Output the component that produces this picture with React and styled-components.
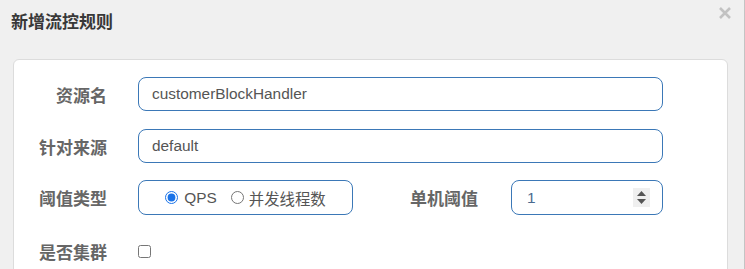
import React from 'react';
import styled, { createGlobalStyle } from 'styled-components';

const GlobalStyle = createGlobalStyle`
    html, body {
        margin: 0;
        padding: 0;
        background: #f0f0f0;
    }
    * {
        box-sizing: border-box;
    }
`;

const FONT = `"Liberation Sans", "Noto Sans CJK SC", sans-serif`;
const BLUE = '#3b78b7';

const Page = styled.div`
    width: 745px;
    height: 269px;
    overflow: hidden;
    background: #f0f0f0;
    font-family: ${FONT};
    border-right: 1px solid #c4c4c4;
`;

const Header = styled.div`
    display: flex;
    justify-content: space-between;
    align-items: flex-start;
    height: 59px;
    padding: 6px 12px 0 11px;
`;

const Title = styled.h4`
    margin: 7px 0 0 0;
    font-size: 17px;
    line-height: 20px;
    font-weight: 700;
    color: #383838;
`;

const Close = styled.button`
    display: flex;
    padding: 0;
    border: none;
    background: none;
    cursor: pointer;
`;

const Card = styled.div`
    margin: 0 16px 0 13px;
    min-height: 240px;
    padding-top: 17px;
    background: #fff;
    border: 1px solid #dcdcdc;
    border-radius: 6px 6px 0 0;
`;

const Row = styled.div`
    display: flex;
    align-items: center;
    height: ${props => props.h}px;
    margin-bottom: ${props => props.gap}px;
`;

const Label = styled.label`
    width: ${props => props.w}px;
    margin-right: ${props => props.mr}px;
    text-align: right;
    font-size: 17px;
    font-weight: 700;
    color: #666;
    white-space: nowrap;
`;

const TextInput = styled.input`
    width: 525px;
    height: 34px;
    padding: 0 13px;
    border: 1px solid ${BLUE};
    border-radius: 8px;
    font-family: ${FONT};
    font-size: 15.4px;
    color: #555;
    outline: none;
`;

const RadioGroup = styled.div`
    display: flex;
    align-items: center;
    justify-content: center;
    width: 215px;
    height: 35px;
    border: 1px solid ${BLUE};
    border-radius: 8px;
`;

const RadioOption = styled.label`
    display: flex;
    align-items: center;
    gap: ${props => props.gap}px;
    margin-right: ${props => props.mr || 0}px;
    font-size: 15.4px;
    color: #555;
    input {
        margin: 0;
        width: 13px;
        height: 13px;
        accent-color: #1a73e8;
    }
`;

const NumberBox = styled.div`
    display: flex;
    align-items: center;
    width: 152px;
    height: 35px;
    padding: 0 12px 0 15px;
    border: 1px solid ${BLUE};
    border-radius: 8px;
`;

const NumberValue = styled.input`
    flex: 1;
    min-width: 0;
    padding: 0;
    border: none;
    outline: none;
    font-family: ${FONT};
    font-size: 15.4px;
    color: #4b6a8f;
`;

const Spinner = styled.div`
    display: flex;
    flex-direction: column;
    align-items: center;
    justify-content: center;
    gap: 3px;
    width: 17px;
    height: 19px;
    background: #efefef;
`;

const Checkbox = styled.input`
    margin: 0;
    width: 13px;
    height: 13px;
`;

const App = () => {
    return (
        <Page>
            <GlobalStyle />
            <Header>
                <Title>新增流控规则</Title>
                <Close aria-label="close">
                    <svg width="14" height="14" viewBox="0 0 14 14">
                        <path d="M2 2 L12 12 M12 2 L2 12" stroke="#c2c2c2" strokeWidth="2.6" strokeLinecap="butt" />
                    </svg>
                </Close>
            </Header>
            <Card>
                <Row h={34} gap={18}>
                    <Label w={93} mr={31}>资源名</Label>
                    <TextInput defaultValue="customerBlockHandler" />
                </Row>
                <Row h={34} gap={17}>
                    <Label w={93} mr={31}>针对来源</Label>
                    <TextInput defaultValue="default" />
                </Row>
                <Row h={35} gap={19}>
                    <Label w={93} mr={31}>阈值类型</Label>
                    <RadioGroup>
                        <RadioOption gap={6} mr={14}>
                            <input type="radio" name="grade" defaultChecked />
                            QPS
                        </RadioOption>
                        <RadioOption gap={5}>
                            <input type="radio" name="grade" />
                            并发线程数
                        </RadioOption>
                    </RadioGroup>
                    <Label w={125} mr={33}>单机阈值</Label>
                    <NumberBox>
                        <NumberValue defaultValue="1" />
                        <Spinner>
                            <svg width="9" height="5" viewBox="0 0 9 5"><path d="M4.5 0 L9 5 L0 5 Z" fill="#555" /></svg>
                            <svg width="9" height="5" viewBox="0 0 9 5"><path d="M0 0 L9 0 L4.5 5 Z" fill="#555" /></svg>
                        </Spinner>
                    </NumberBox>
                </Row>
                <Row h={34} gap={0}>
                    <Label w={93} mr={31}>是否集群</Label>
                    <Checkbox type="checkbox" />
                </Row>
            </Card>
        </Page>
    );
};

export default App;
